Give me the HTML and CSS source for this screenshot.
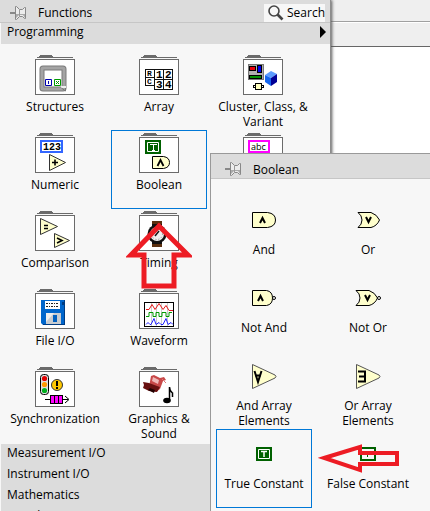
FILE: index.html
```html
<!DOCTYPE html>
<html lang="en">
<head>
<meta charset="utf-8">
<title>Functions</title>
<link rel="stylesheet" href="styles.css">
</head>
<body>
<svg class="defs" aria-hidden="true">
  <defs>
    <g id="folder" shape-rendering="crispEdges">
      <path fill="#6b6b6b" d="M5 0h12v1h1v1h20v1H2V2h2V1h1z"/>
      <path fill="#fff" stroke="#6b6b6b" d="M.5 4.500h39v35H.5z"/>
    </g>
    <g id="pin">
      <path d="M0 7h6" stroke="#888" stroke-width="2"/>
      <path d="M5.500 .5v13h1l3-3 3 0 2 2h1v-11h-1l-2 2h-3l-3-3z" fill="#ececec" stroke="#888"/>
      <path d="M6 12l3-3h4l2 3v-4H6z" fill="#aaa"/>
      <path d="M9.500 4v6" stroke="#999"/>
    </g>
    <g id="green-box">
      <path fill="#006100" d="M0 0h16v14H0z"/>
      <path fill="none" stroke="#fff" d="M2.500 2.500h11v9h-11z"/>
    </g>
  </defs>
</svg>
<div class="window"><div class="strip"></div><div class="strip strip-low"></div></div>

<main class="palette">
  <header class="titlebar">
    <svg class="pin" viewBox="0 0 16 14"><use href="#pin"/></svg>
    <h1>Functions</h1>
    <button class="search" type="button">
      <svg viewBox="0 0 16 16"><circle cx="6" cy="6" r="5" fill="#f7f7f7" stroke="#444" stroke-width="1.600"/><path d="M9.500 9.500l5 5" stroke="#444" stroke-width="2.600"/></svg>
      Search
    </button>
  </header>
  <button class="category current" type="button">Programming <svg viewBox="0 0 6 12"><path d="M0 0l6 6-6 6z"/></svg></button>

  <div class="grid">
    <button class="cell" type="button">
      <svg class="icon" viewBox="0 0 40 40"><use href="#folder"/>
        <rect x="7" y="13" width="22" height="21" rx="1" fill="none" stroke="#7a7a7a" stroke-width="5"/>
        <rect x="7" y="13" width="22" height="21" rx="1" fill="none" stroke="#a4a4a4" stroke-width="3"/>
        <path d="M26 31h5v2h-5z" fill="#eee"/><path d="M30.500 33v3l-4-3" fill="none" stroke="#777"/>
        <path d="M10.500 24.500h6v6h-6z" fill="#fff" stroke="#0000b0"/><path d="M13.500 26v3" stroke="#0000b0"/>
        <path d="M19.500 24.500h6v6h-6z" fill="#fff" stroke="#009a00"/><path d="M21 26l3 3M24 26l-3 3" stroke="#009a00"/>
      </svg>
      <span>Structures</span>
    </button>
    <button class="cell" type="button">
      <svg class="icon" viewBox="0 0 40 40"><use href="#folder"/>
        <path fill="none" stroke="#111" shape-rendering="crispEdges" d="M6.500 14.500h9v16h-9zM6.500 22.500h9M15.500 14.500h18v20h-18zM15.500 24.500h18M24.500 14.500v20"/>
        <g class="mono"><text x="8" y="21" font-size="8">R</text><text x="8" y="29" font-size="8">C</text><text x="17" y="23" font-size="11">1</text><text x="26" y="23" font-size="11">2</text><text x="17" y="33" font-size="11">3</text><text x="26" y="33" font-size="11">4</text></g>
      </svg>
      <span>Array</span>
    </button>
    <button class="cell" type="button">
      <svg class="icon" viewBox="0 0 40 40"><use href="#folder"/>
        <g shape-rendering="crispEdges"><path fill="#b0b0b0" stroke="#777" d="M5.500 9.500h15v15h-15z"/>
        <path fill="#e8000c" stroke="#000" d="M6.500 11.500h6v4h-6z"/><path fill="#0000f0" stroke="#000" d="M14.500 10.500h4v7h-4z"/><path fill="#009000" stroke="#000" d="M6.500 20.500h12v3h-12z"/>
        <path fill="#ffffc0" stroke="#000" d="M12.500 28.500h6v6h-6z"/><path d="M10.500 30v3M20.500 30v3M10 30.500h2M10 32.500h2M19 30.500h2M19 32.500h2" stroke="#000"/></g>
        <path fill="#5c9cff" d="M22 20l6-4 6 3-6 4z"/><path fill="#1666ee" d="M22 20l6 3v8l-6-4z"/><path fill="#000096" d="M28 23l6-4v8l-6 4z"/>
      </svg>
      <span>Cluster, Class, &amp; Variant</span>
    </button>
    <button class="cell" type="button">
      <svg class="icon" viewBox="0 0 40 40"><use href="#folder"/>
        <path fill="#fff" stroke="#3366ff" stroke-width="2" d="M6 8h21v11H6z"/><text class="mono" x="8" y="17" font-size="10">123</text>
        <path fill="#ffffcc" stroke="#333" d="M14.500 21.500v16l16-8z"/><path d="M17 29.500h6M20 26.500v6" stroke="#000" stroke-width="1.600"/>
      </svg>
      <span>Numeric</span>
    </button>
    <button class="cell selected" type="button">
      <svg class="icon" viewBox="0 0 40 40"><use href="#folder"/>
        <use href="#green-box" x="6" y="7"/><path d="M11 11.500h7M14.500 11v7M13 17.500h3" stroke="#fff"/>
        <path fill="#ffffcc" stroke="#000" d="M13.500 23.500h11q6 1 6 6t-6 6h-11z"/><path d="M18.500 33l3-6 3 6" fill="none" stroke="#000" stroke-width="1.800"/>
      </svg>
      <span>Boolean</span>
    </button>
    <button class="cell" type="button" aria-label="abc">
      <svg class="icon" viewBox="0 0 40 40"><use href="#folder"/>
        <path fill="#fff" stroke="#f0f" stroke-width="2" d="M6 8h20v11H6z"/><text x="8" y="17" font-size="9">abc</text>
      </svg>
    </button>
    <button class="cell" type="button">
      <svg class="icon" viewBox="0 0 40 40"><use href="#folder"/>
        <path fill="#ffffcc" stroke="#333" d="M5.500 7.500v16l17-8zM19.500 22.500v14l15-7z"/>
        <path d="M9 14.500h4M9 17.500h4M22 27l5 2.500-5 2.500" fill="none" stroke="#000" stroke-width="1.600"/>
      </svg>
      <span>Comparison</span>
    </button>
    <button class="cell" type="button">
      <svg class="icon" viewBox="0 0 40 40"><use href="#folder"/>
        <path fill="#5a3010" d="M13 10h10v5H13zM13 31h10v5H13z"/><path fill="#111" d="M13 13h10v2H13zM13 31h10v2H13z"/>
        <circle cx="18" cy="23" r="9.500" fill="#111"/><circle cx="18" cy="23" r="7" fill="#eee"/>
        <circle cx="18" cy="23" r="5.500" fill="none" stroke="#888" stroke-dasharray="1 2"/><path d="M16 25l4-5" stroke="#111" stroke-width="1.500"/>
      </svg>
      <span>Timing</span>
    </button>
    <span></span>
    <button class="cell" type="button">
      <svg class="icon" viewBox="0 0 40 40"><use href="#folder"/>
        <path fill="#0066cc" d="M6 11h24v25H8l-2-2z"/><path fill="#003c82" d="M29 11h1v25H8v-1h21zM27 13h2v3h-2z"/>
        <path fill="#fff" d="M10 12h15v8H10z"/><path d="M11 14.500h13M11 17.500h13" stroke="#222" stroke-dasharray="2 1 1 1"/>
        <path fill="#c8ccd0" d="M11 24h15v11H11z"/><path fill="#eee" d="M11 24h8l-8 9z"/><path fill="#0060c0" d="M18 26h4v7h-4z"/>
      </svg>
      <span>File I/O</span>
    </button>
    <button class="cell" type="button">
      <svg class="icon" viewBox="0 0 40 40"><use href="#folder"/>
        <path fill="#fff" stroke="#000" shape-rendering="crispEdges" d="M5.500 13.500h29v24h-29z"/>
        <path d="M12.500 14v23M17.500 14v23M22.500 14v23M28.500 14v23" stroke="#ccc"/>
        <path d="M7 20.500h3l3-5 3 5 4-6 4 6 3-4 3 5h4" fill="none" stroke="#e81818"/>
        <path d="M7 27.500h3v-4h4v4h3v-4h3v4h3v-4h4v4h3v-4h3" fill="none" stroke="#009900"/>
        <path d="M7 35.500l2-2 2 2h1l3-6 2 6 3-2 2 2h2l3-6 2 6 3-2 2 2" fill="none" stroke="#2020ff"/>
      </svg>
      <span>Waveform</span>
    </button>
    <span></span>
    <button class="cell" type="button">
      <svg class="icon" viewBox="0 0 40 40"><use href="#folder"/>
        <rect x="5.500" y="7.500" width="8" height="20" rx="3" fill="#ddd" stroke="#000"/>
        <circle cx="9.500" cy="11.500" r="2.600" fill="#e00000"/><circle cx="9.500" cy="17.500" r="2.600" fill="#ff9900"/><circle cx="9.500" cy="23.500" r="2.600" fill="#00b020"/>
        <circle cx="22" cy="18" r="5.500" fill="#ffc800" stroke="#333"/><path d="M22 14v5M22 20v2" stroke="#000" stroke-width="2"/>
        <path d="M10 32.500h23M30 29l4 3.500-4 3.500" fill="none" stroke="#000"/>
        <path fill="#f0f" stroke="#000" shape-rendering="crispEdges" d="M15.500 28.500h12v8h-12zM19.500 28.500v8M23.500 28.500v8"/>
      </svg>
      <span>Synchronization</span>
    </button>
    <button class="cell" type="button">
      <svg class="icon" viewBox="0 0 40 40"><use href="#folder"/>
        <path fill="#c84848" d="M12 9l3-1 6 3 4-1 2 3-3 1-3 8-4 3-7-5z"/><path fill="#f0b8b8" d="M14 10l6 3-1 4-6-3z"/>
        <path fill="#681010" d="M4 15l6 1 8 3 3 1-3 5-8-1-6-3 1-3z"/><path fill="#200" d="M11 21l5 2-1 3-6-3z"/><path d="M23 12l4 4" stroke="#d77"/>
        <ellipse cx="28" cy="33.500" rx="3.800" ry="2.800"/><path d="M30.500 33V20q0 4 3 6v4" fill="none" stroke="#000" stroke-width="1.500"/>
      </svg>
      <span>Graphics &amp; Sound</span>
    </button>
  </div>

  <nav class="categories">
    <button class="category" type="button">Measurement I/O</button>
    <button class="category" type="button">Instrument I/O</button>
    <button class="category" type="button">Mathematics</button>
    <button class="category" type="button">Signal Processing</button>
  </nav>
</main>

<section class="subpalette">
  <header class="titlebar">
    <svg class="pin" viewBox="0 0 16 14"><use href="#pin"/></svg>
    <h2>Boolean</h2>
  </header>
  <div class="grid">
    <button class="cell" type="button">
      <svg class="icon" viewBox="0 0 40 40"><path fill="#ffffcc" stroke="#000" d="M8.500 14.500h15q8 1 8 7.500t-8 7.500h-15z"/><path d="M16 25l2.500-5 2.500 5" fill="none" stroke="#000" stroke-width="2"/></svg>
      <span>And</span>
    </button>
    <button class="cell" type="button">
      <svg class="icon" viewBox="0 0 40 40"><path fill="#ffffcc" stroke="#000" d="M10 14.500h13q6 2 8.500 7.500-2.500 6-8.500 7.500H10q4-3 4-7.500t-4-7.500z"/><path d="M18 19l2.500 5 2.500-5" fill="none" stroke="#000" stroke-width="2"/></svg>
      <span>Or</span>
    </button>
    <span></span>
    <button class="cell" type="button">
      <svg class="icon" viewBox="0 0 40 40"><path fill="#ffffcc" stroke="#000" d="M8.500 14.500h14q6 1 6 7.500t-6 7.500h-14z"/><circle cx="30" cy="22" r="1.500" fill="#fff" stroke="#000"/><path d="M14 25l2.500-5 2.500 5" fill="none" stroke="#000" stroke-width="2"/></svg>
      <span>Not And</span>
    </button>
    <button class="cell" type="button">
      <svg class="icon" viewBox="0 0 40 40"><path fill="#ffffcc" stroke="#000" d="M8 14.500h13q6 2 8.500 7.500-2.500 6-8.500 7.500H8q4-3 4-7.500t-4-7.500z"/><circle cx="31" cy="22" r="1.500" fill="#fff" stroke="#000"/><path d="M17 19l2.500 5 2.500-5" fill="none" stroke="#000" stroke-width="2"/></svg>
      <span>Not Or</span>
    </button>
    <button class="cell" type="button">
      <svg class="icon" viewBox="0 0 40 40"></svg>
      <span>Not Exclusive Or</span>
    </button>
    <button class="cell" type="button">
      <svg class="icon" viewBox="0 0 40 40"><path fill="#ffffcc" stroke="#555" d="M8.500 10.500L31 21q2 1.500 0 3L8.500 34.500z"/><path d="M10.500 17l3.500 11 3.500-11M11 21.500h6" fill="none" stroke="#000" stroke-width="2"/></svg>
      <span>And Array Elements</span>
    </button>
    <button class="cell" type="button">
      <svg class="icon" viewBox="0 0 40 40"><path fill="#ffffcc" stroke="#555" d="M8.500 10.500L31 21q2 1.500 0 3L8.500 34.500z"/><path d="M10 17.500h7v10h-7M11 22.500h6" fill="none" stroke="#000" stroke-width="2"/></svg>
      <span>Or Array Elements</span>
    </button>
    <span></span>
    <button class="cell selected" type="button">
      <svg class="icon" viewBox="0 0 40 40"><use href="#green-box" x="12" y="15"/><path d="M17 19.500h6M20 19v6" stroke="#fff" stroke-width="1.500"/></svg>
      <span>True Constant</span>
    </button>
    <button class="cell" type="button">
      <svg class="icon" viewBox="0 0 40 40"><path fill="#f7f7f7" stroke="#006100" stroke-width="2" d="M13 16h14v12H13z"/><path d="M19 19.500h4M19.500 19v6M19 22.500h3" stroke="#006100"/></svg>
      <span>False Constant</span>
    </button>
  </div>
</section>

<svg class="arrow arrow-up" viewBox="0 0 66 70"><path d="M33 5L5 34h13v31h30V34h14z"/></svg>
<svg class="arrow arrow-left" viewBox="0 0 84 32"><path d="M6 16L42 5v6h37v11H42v6z"/></svg>
</body>
</html>
```
FILE: styles.css
```css
* { box-sizing: border-box; }

body {
  margin: 0;
  height: 100vh;
  position: relative;
  overflow: hidden;
  background: #fff;
  color: #000;
  font: 12px/15px "Open Sans", "Noto Sans", sans-serif;
}

button {
  margin: 0;
  padding: 0;
  border: 0;
  background: none;
  color: inherit;
  font: inherit;
}

h1, h2 { margin: 0; font: inherit; }

.defs { position: absolute; width: 0; height: 0; }

/* Application window behind the palettes */
.window { position: absolute; inset: 0; }
.strip { height: 22px; background: #efefef; border-bottom: 1px solid #a0a0a0; }
.strip-low { height: 25px; border-top: 1px solid #fff; border-bottom-color: #666; }

.palette {
  position: relative;
  width: fit-content;
  height: 100%;
  overflow: hidden;
  background: #f7f7f7;
  border-right: 1px solid #8c8c8c;
  box-shadow: 1px 0 3px #555;
}

.titlebar {
  display: flex;
  align-items: center;
  height: 23px;
  padding: 3px 5px 0 10px;
  gap: 12px;
  background: #dcdcdc;
  border-bottom: 1px solid #c6c6c6;
}
.pin { width: 16px; height: 14px; }

.search {
  display: flex;
  align-items: center;
  gap: 3px;
  height: 18px;
  margin-left: auto;
  padding-left: 4px;
  background: #f7f7f7;
}
.search svg { width: 16px; height: 16px; }

.category {
  display: flex;
  align-items: center;
  justify-content: space-between;
  width: 100%;
  height: 21px;
  padding: 0 4px 4px 6px;
  background: #dcdcdc;
  border-left: 1px solid #f7f7f7;
}
.category svg { width: 6px; height: 12px; }

.grid {
  display: grid;
  grid-template-columns: repeat(3, 96px);
  grid-auto-rows: 78px;
  column-gap: 8px;
}
.palette .grid { padding: 8px 19px 2px 7px; }

.cell {
  display: flex;
  flex-direction: column;
  align-items: center;
  gap: 4px;
  height: 79px;
  padding-top: 3px;
  text-align: center;
}
.cell span { width: 90px; }
.icon { width: 40px; height: 40px; flex: none; }
.selected { outline: 1px solid #0078d7; outline-offset: -1px; }
.mono { font-family: "Liberation Mono", monospace; font-weight: bold; }

.subpalette {
  position: absolute;
  top: 153px;
  left: 210px;
  right: 0;
  bottom: 0;
  overflow: hidden;
  background: #f7f7f7;
  border: solid #999;
  border-width: 1px 0 0 1px;
}
.subpalette .titlebar { height: 25px; padding: 6px 14px 0; }
.subpalette .grid { padding: 16px 5px; }

.arrow { position: absolute; fill: none; stroke: #ed1c24; stroke-width: 5; }
.arrow-up { left: 126px; top: 221px; width: 66px; height: 70px; }
.arrow-left { left: 318px; top: 442px; width: 84px; height: 32px; stroke-width: 4; }
```
